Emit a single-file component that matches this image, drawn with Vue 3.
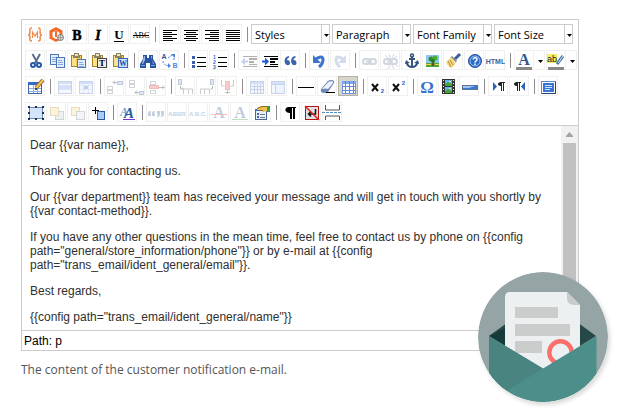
<template>
  <main class="page">
    <div class="field">
      <section class="editor">
        <div class="toolbar" role="toolbar" aria-label="Editor toolbar">
          <div v-for="(row, r) in rows" :key="r" class="row">
            <template v-for="(item, i) in row" :key="i">
              <span v-if="item === '|'" class="separator"></span>
              <span v-else-if="item.select" class="combo">
                <select :aria-label="item.select">
                  <option>{{ item.select }}</option>
                </select>
                <svg class="combo-arrow" viewBox="0 0 7 18"><path d="M2 9h5L4.500 12z" /></svg>
              </span>
              <span v-else-if="item.menu" class="split">
                <button type="button" class="tool" :title="item.menu">
                  <svg viewBox="0 0 20 20" v-html="icons[item.menu]"></svg>
                </button>
                <button type="button" class="drop" :title="item.menu + ' menu'">
                  <svg viewBox="0 0 11 20"><path d="M4 10h5L6.500 13z" /></svg>
                </button>
              </span>
              <button
                v-else
                type="button"
                :class="['tool', { active: item === 'visualaid' }]"
                :title="item"
                :disabled="disabled.includes(item)"
              >
                <svg viewBox="0 0 20 20" v-html="icons[item]"></svg>
              </button>
            </template>
          </div>
        </div>

        <div class="body">
          <div class="content" contenteditable="true">
            <p v-for="(text, i) in message" :key="i">{{ text }}</p>
          </div>
          <div class="scrollbar">
            <svg viewBox="0 0 17 17"><path d="M5 11h7v-1l-3.500-4L5 10z" /></svg>
            <div class="thumb"></div>
            <svg viewBox="0 0 17 17"><path d="M5 6h7v1l-3.500 4L5 7z" /></svg>
          </div>
        </div>

        <div class="path">Path: <a href="#">p</a></div>
      </section>
      <p class="note">The content of the customer notification e-mail.</p>

      <svg class="badge" viewBox="0 0 130 130">
        <defs>
          <clipPath id="round"><circle cx="65" cy="65" r="65" /></clipPath>
        </defs>
        <g clip-path="url(#round)">
          <rect width="130" height="130" fill="#95a5a5" />
          <path d="M11 64L65 25l53 39-53 33z" fill="#264846" />
          <path d="M11 64l16-8v18z" fill="#173b3a" />
          <path d="M32 20h57l13 13v64H27V25q0-5 5-5z" fill="#ecf0f1" />
          <path d="M89 20l13 13h-6q-7 0-7-7z" fill="#c9caca" />
          <path d="M37 35h43v11H37zM37 52h55v12H37zM37 69h27v12H37z" fill="#cbcccc" />
          <circle cx="82.500" cy="80.500" r="11.200" fill="none" stroke="#fb706d" stroke-width="4.400" />
          <path d="M11 64l54 32.500L118.500 64v66H11z" fill="#4b8e8a" />
          <path d="M11 64l54 32.500L30 118l-19 12z" fill="#4a8480" />
        </g>
      </svg>
    </div>
  </main>
</template>

<script setup>
const message = [
  'Dear {{var name}},',
  'Thank you for contacting us.',
  'Our {{var department}} team has received your message and will get in touch with you shortly by {{var contact-method}}.',
  'If you have any other questions in the mean time, feel free to contact us by phone on {{config path="general/store_information/phone"}} or by e-mail at {{config path="trans_email/ident_general/email"}}.',
  'Best regards,',
  '{{config path="trans_email/ident_general/name"}}',
];

const rows = [
  [
    'variable', 'widget', 'bold', 'italic', 'underline', 'strike', '|',
    'left', 'center', 'right', 'justify', '|',
    { select: 'Styles' }, { select: 'Paragraph' }, { select: 'Font Family' }, { select: 'Font Size' },
  ],
  [
    'cut', 'copy', 'paste', 'pastetext', 'pasteword', '|', 'search', 'replace', '|',
    'bullist', 'numlist', '|', 'outdent', 'indent', 'blockquote', '|', 'undo', 'redo', '|',
    'link', 'unlink', 'anchor', 'image', 'cleanup', 'help', 'html', '|',
    { menu: 'forecolor' }, { menu: 'backcolor' },
  ],
  [
    'table', '|', 'rowprops', 'cellprops', '|', 'rowbefore', 'rowafter', 'rowdelete', '|',
    'colbefore', 'colafter', 'coldelete', '|', 'splitcells', 'mergecells', '|',
    'hr', 'eraser', 'visualaid', '|', 'sub', 'sup', '|', 'charmap', 'media', 'advhr', '|',
    'ltr', 'rtl', '|', 'fullscreen',
  ],
  [
    'layer', 'forward', 'backward', 'absolute', '|', 'styleprops', '|',
    'cite', 'abbr', 'acronym', 'del', 'ins', 'attribs', '|', 'visualchars', 'nonbreaking', 'pagebreak',
  ],
];

const disabled = [
  'outdent', 'redo', 'link', 'unlink', 'rowprops', 'cellprops', 'rowbefore', 'rowafter', 'rowdelete',
  'colbefore', 'colafter', 'coldelete', 'splitcells', 'mergecells', 'forward', 'backward',
  'cite', 'abbr', 'acronym', 'del', 'ins',
];

// drawing helpers, all on a 20x20 grid
const box = (x, y, w, h, fill) => `<rect x="${x}" y="${y}" width="${w}" height="${h}" fill="${fill}"/>`;
const frame = (x, y, w, h, fill, stroke) =>
  `<rect x="${x + 0.5}" y="${y + 0.5}" width="${w - 1}" height="${h - 1}" fill="${fill}" stroke="${stroke}"/>`;
const shape = (d, fill) => `<path d="${d}" fill="${fill}"/>`;
const line = (d, stroke, width = 1) => `<path d="${d}" fill="none" stroke="${stroke}" stroke-width="${width}"/>`;
const text = (x, y, size, value, fill = '#000', extra = '') =>
  `<text x="${x}" y="${y}" font-size="${size}" fill="${fill}" text-anchor="middle" ${extra}>${value}</text>`;
const serif = 'font-family="Liberation Serif" font-weight="bold"';
const sans = 'font-family="Liberation Sans" font-weight="bold"';

const bars = (list) => list.map(([x, w], i) => box(x, 6 + i * 2, w, 1, '#000')).join('');

const clipboard =
  frame(4, 5, 11, 12, '#f3c94c', '#a9822a') +
  shape('M5 6h4v10H5z', '#fbe28a') +
  shape('M7 3h5v2h1v3H6V5h1z', '#8a8462') + box(8, 4, 3, 2, '#e9e4c4');
const sheet = (x, y, w, h) =>
  frame(x, y, w, h, '#e3eefc', '#4f75b5') +
  box(x + 2, y + 3, w - 5, 1, '#86a8dd') + box(x + 2, y + 5, w - 4, 1, '#86a8dd') + box(x + 2, y + 7, w - 4, 1, '#86a8dd');
const grid = frame(4, 5, 14, 13, '#dce8fb', '#4b70b8') + box(5, 6, 12, 2, '#6f9be8');
const cell = (x, y) => frame(x, y, 6, 4, '#fff', '#687384');
const quote = 'M8.500 6C5 7 4 10 5 13c1 3 5 3 5 0 0-2-1-3-3-3 0-1 1-2 2.500-3zM15 6c-3.500 1-4.500 4-3.500 7 1 3 5 3 5 0 0-2-1-3-3-3 0-1 1-2 2.500-3z';
const indentLines = box(5, 6, 14, 1, '#000') + box(11, 8, 8, 2, '#000') + box(11, 11, 5, 2, '#000') +
  box(11, 14, 8, 1, '#000') + box(5, 16, 14, 1, '#000');
const chain = '<g fill="none" stroke="#6b7c9e" stroke-width="2"><rect x="4" y="9" width="7" height="5" rx="2.500"/><rect x="10" y="9" width="7" height="5" rx="2.500"/><path d="M7 11.500h6"/></g>';
const pilcrow = (x, y) =>
  shape(`M${x} ${y}h7v1h-1v8h-1v-8h-1v8h-1v-5c-4 0-4-4 0-4z`, '#222');

const icons = {
  variable:
    line('M7 4Q4 4 5 8q0 3-2 3 2 0 2 3-1 3 2 3M13 4q3 0 2 4 0 3 2 3-2 0-2 3 1 3-2 3', '#f08a50', 1.5) +
    line('M7.500 14V8l2.500 4 2.500-4v6', '#f08a50', 1.2),
  widget:
    shape('M10 3l6.500 3.500v8L10 18l-6.500-3.500v-8z', '#f26b2b') +
    shape('M10 6.500l3.500 2v5L10 15l-3.500-2V8.500z', '#fff') +
    line('M10 7v6', '#f26b2b', 2) +
    '<circle cx="14.500" cy="13.500" r="3" fill="#ddd" stroke="#777"/>' + line('M12 13.500h5M14.500 11v5', '#888', 0.7),
  bold: text(10, 16, 14, 'B', '#000', serif + ' stroke="#000" stroke-width=".5"'),
  italic: text(10, 16, 14, 'I', '#000', serif + ' font-style="italic" stroke="#000" stroke-width=".5"'),
  underline: text(10, 15, 13, 'U', '#000', serif) + box(5, 17, 10, 1, '#000'),
  strike: text(11, 14, 8, 'ABC', '#000', 'font-family="Liberation Serif"') + box(3, 11, 16, 1, '#000'),
  left: bars([[4, 14], [4, 9], [4, 14], [4, 9], [4, 14], [4, 10]]),
  center: bars([[4, 14], [6, 10], [4, 14], [6, 10], [4, 14], [6, 10]]),
  right: bars([[4, 14], [9, 9], [4, 14], [9, 9], [4, 14], [8, 10]]),
  justify: bars([[4, 14], [4, 14], [4, 14], [4, 14], [4, 14], [4, 14]]),

  cut:
    line('M7.500 4l5 9M15 4l-5 9', '#5c6f8f', 2) +
    '<g fill="none" stroke="#2857a8" stroke-width="2"><circle cx="8" cy="15" r="2"/><circle cx="14" cy="15" r="2"/></g>',
  copy: sheet(4, 4, 9, 11) + sheet(10, 7, 9, 11),
  paste: clipboard + sheet(10, 9, 9, 9),
  pastetext: clipboard + frame(9, 8, 10, 10, '#eee', '#444') + text(14, 16, 9, 'T', '#000', serif),
  pasteword: clipboard + frame(9, 8, 10, 10, '#cfe0fa', '#3465b8') + text(14, 16, 8, 'W', '#1d4fa8', serif),
  search:
    shape('M5 5h4v3h2V5h4v4l3 5v4h-6v-5H8v5H2v-4l3-5z', '#27549f') +
    shape('M6 6h1v4l-2 4H4zM13 6h1v4l2 4h-1z', '#9dbdf0') + box(3, 15, 4, 1, '#7ea6e6') + box(13, 15, 4, 1, '#7ea6e6'),
  replace:
    text(5, 9, 7, 'A', '#33549a', sans) + text(16, 18, 7, 'B', '#4e86e6', sans) +
    '<path d="M9 8l4-3M4 11q0 4 6 5M15 5v5" fill="none" stroke="#4e82da" stroke-dasharray="2 1"/>' +
    shape('M12 4h4v4zM9 13l3 3-3 2z', '#4e82da'),
  bullist: [6, 11, 15].map((y) => box(4, y, 3, 3, '#3b5fae') + box(9, y + 1, 9, 1, '#000')).join(''),
  numlist: [1, 2, 3].map((n) => text(5.5, 4 + n * 5, 5, n, '#2e66cc', sans)).join('') +
    box(9, 7, 9, 1, '#000') + box(9, 12, 9, 1, '#000') + box(9, 16, 9, 1, '#000'),
  outdent: indentLines + shape('M3 11.500l4-4v3h3v2H7v3z', '#3b6fd0'),
  indent: indentLines + shape('M10 11.500l-4-4v3H3v2h3v3z', '#1f5bd0'),
  blockquote: shape(quote, '#3a65ac'),
  undo: line('M5.500 10Q14 4 14 10q0 4-4 7', '#3f74ce', 3) + shape('M4 5v8h8z', '#3f74ce'),
  redo: line('M14.500 10Q6 4 6 10q0 4 4 7', '#6f8fc4', 3) + shape('M16 5v8H8z', '#6f8fc4'),
  link: chain,
  unlink: chain + line('M9 4l1 4M14 4l-2 4M17 6l-3 2M5 5l3 3M10 15l-2 4M12 15l2 4M15 14l3 3', '#6b7c9e'),
  anchor:
    '<circle cx="11" cy="5.500" r="1.500" fill="none" stroke="#35547f" stroke-width="1.500"/>' +
    line('M11 7v10M8 9h6M5.500 12q1 5 5.500 5t5.500-5', '#35547f', 2) + shape('M4 14l1-4 4 3zM18 14l-1-4-4 3z', '#35547f'),
  image:
    box(4, 5, 13, 9, '#8ec5f5') + box(4, 13, 13, 4, '#4ea52f') + box(10, 12, 2, 4, '#7a4a1c') +
    '<circle cx="9" cy="9" r="2.500" fill="#2d8f24"/><circle cx="13" cy="8" r="2.500" fill="#4bae2e"/><circle cx="11" cy="11" r="2" fill="#217d1e"/>' +
    box(4, 14, 5, 1, '#f1d84a') + box(13, 14, 4, 1, '#f1d84a'),
  cleanup:
    line('M12 9l5-5', '#3f5d95', 3) + shape('M9 6l5 5-2 2-5-5z', '#6f7da0') +
    shape('M8 7l5 5q-1 4-5 6-4-2-5-6 3-3 5-5z', '#f5d98a') + line('M5 11l3 6M7 10l3 5', '#b98a38'),
  help:
    '<circle cx="11" cy="11" r="6.500" fill="#2d68c4" stroke="#1f4f9e"/><circle cx="11" cy="11" r="5" fill="none" stroke="#bcd5fa" stroke-width=".8"/>' +
    text(11, 14.5, 10, '?', '#fff', sans),
  html: text(10.5, 14, 7, 'HTML', '#3c6496', sans),
  forecolor: text(10, 15, 16, 'A', '#34568f', serif) + box(2, 17, 16, 3, '#888'),
  backcolor:
    box(1, 4, 10, 9, '#f5ef63') + text(6, 12, 9, 'ab', '#222', 'font-family="Liberation Sans"') +
    line('M11 14l6-8', '#4470a8', 3) + line('M12 13l5-7', '#dbe8fa') + box(2, 17, 16, 3, '#888'),

  table:
    frame(3, 6, 14, 12, '#fff', '#3e64a8') + box(3, 6, 14, 3, '#3469c8') + line('M4 12.500h12M4 15.500h12M8.500 9v8M12.500 9v8', '#88aee6') +
    line('M11 12l7-8', '#a06a2d', 4) + line('M11 12l7-8', '#f1c35b', 2) + box(10, 12, 2, 2, '#444'),
  rowprops: grid + box(5, 10, 12, 3, '#6f9be8') + line('M5 13.500h12M5 9.500h12', '#8aa9de'),
  cellprops: grid + box(9, 10, 5, 3, '#2763d9') + line('M5 9.500h12M5 13.500h12M8.500 8v9M13.500 8v9', '#9bb6e4'),
  rowbefore: line('M9 6.500h4M11 4.500l-2 2 2 2', '#222') + frame(13, 5, 6, 4, '#8ab0ee', '#3b5486') + cell(3, 10) + cell(3, 14),
  rowafter: cell(4, 4) + cell(4, 8) + line('M10 16.500h4M12 14.500l-2 2 2 2', '#222') + frame(14, 15, 5, 4, '#8ab0ee', '#3b5486'),
  rowdelete: cell(4, 5) + frame(3, 9, 10, 4, '#f05050', '#c22') + cell(4, 14) + line('M13 11.500h6M17 9.500v4', '#333'),
  colbefore: frame(3, 3, 4, 6, '#8ab0ee', '#3b5486') + line('M5.500 10v3h3M7 11.500l2 2', '#222') + line('M8.500 18v-5h9v5M13.500 13v5', '#555'),
  colafter: frame(14, 3, 4, 6, '#8ab0ee', '#3b5486') + line('M16.500 10v3h-2', '#222') + line('M4.500 18v-5h9v5M8.500 13v5', '#555'),
  coldelete: line('M4.500 4v6h3M16.500 4v6h-3', '#555') + frame(8, 5, 5, 9, '#f05050', '#c22') + line('M10.500 14v4M8 16.500h5', '#333'),
  splitcells: grid + line('M5 10.500h12M5 13.500h12M8.500 8v9M11.500 8v9M14.500 8v9', '#4b70b8'),
  mergecells: grid + line('M8.500 8v9M5 8.500h12', '#4b70b8') + box(9, 9, 8, 8, '#c7daf8'),
  hr: box(2, 11, 16, 1, '#000'),
  eraser:
    shape('M4 13l7-8q1-1 3-1 4 0 3 3l-6 9q-1 1-4 1-4 0-3-4z', '#6f89b8') +
    shape('M5 13L12 5.500q5-1 4 1.500l-5 6q-2-1-6 0z', '#eef4fd') + box(9, 16, 9, 1, '#000'),
  visualaid:
    frame(4, 5, 14, 13, '#fff', '#6f97e0') + box(4, 5, 14, 3, '#7fa6ee') +
    '<path d="M4 10.500h14M4 14.500h14M7.500 5v13M11.500 5v13M15.500 5v13" stroke="#6287d8"/>',
  sub: line('M5 8l6 7M11 8l-6 7', '#111', 2) + text(15.5, 17, 6, '2', '#2a62c8', sans),
  sup: line('M5 8l6 7M11 8l-6 7', '#111', 2) + text(15.5, 9, 6, '2', '#2a62c8', sans),
  charmap: text(10, 17, 17, 'Ω', '#3c70cf', serif),
  media:
    box(4, 3, 13, 15, '#333') + box(7, 4, 7, 6, '#63b7ef') + box(7, 11, 7, 6, '#63b7ef') +
    shape('M7 8l3-2 4 2v2H7zM7 15l3-2 4 2v2H7z', '#46a634') + box(11, 5, 2, 1, '#ffd94e') + box(11, 12, 2, 1, '#ffd94e') +
    [4, 7, 10, 13, 16].map((y) => box(5, y, 1, 1, '#eee') + box(15, y, 1, 1, '#eee')).join(''),
  advhr: frame(3, 9, 16, 5, '#3a78d8', '#5c7392') + shape('M4 10h12l-6 2H4z', '#9fc5f8'),
  ltr: shape('M5 6l4 4.500L5 15z', '#2d62b5') + pilcrow(10, 6),
  rtl: pilcrow(5, 6) + shape('M16 6v9l-4-4.500z', '#2d62b5'),
  fullscreen:
    frame(3, 5, 15, 13, '#fff', '#5c86c8') + box(5, 7, 11, 9, '#3976d4') +
    line('M7 9.500h7M7 11.500h7M7 13.500h5', '#cfe2fc') + line('M4 17.500h13.500V6', '#24426f'),

  layer:
    frame(4, 5, 14, 12, '#d4e4fb', '#6f87ac') +
    [[3, 4], [10, 4], [17, 4], [3, 10], [17, 10], [3, 16], [10, 16], [17, 16]].map(([x, y]) => box(x, y, 2, 2, '#17335c')).join(''),
  forward: frame(9, 9, 9, 9, '#c9ccd4', '#6d7688') + frame(4, 5, 9, 9, '#f6dc7c', '#b08b36'),
  backward: frame(4, 5, 9, 9, '#f6dc7c', '#b08b36') + frame(9, 9, 9, 9, '#dfe1e6', '#6d7688'),
  absolute: line('M7.500 5v7M4 8.500h7', '#000', 1) + frame(9, 9, 8, 9, '#a9cbf8', '#2d5a9f'),
  styleprops:
    text(7, 14, 12, 'A', '#6a9be0', serif + ' font-style="italic"') +
    text(12, 16, 15, 'A', '#2f5c9e', serif + ' font-style="italic"') + box(6, 17, 12, 1, '#7a35d8'),
  cite:
    [2, 6].map((x) => shape(`M${x} 14v-3q0-2 3-2v1l-1 1.500h1V14z`, '#3d6590')).join('') +
    [11, 15].map((x) => shape(`M${x} 9h3v3q0 3-3 3v-1l1-2h-1z`, '#3d6590')).join(''),
  abbr: text(10, 14, 6, 'ABBR', '#3d6590', sans),
  acronym: text(10, 14, 6, 'A.B.C.', '#3d6590', sans),
  del: text(10, 16, 16, 'A', '#34568f', serif) + box(2, 12, 16, 1, '#e22'),
  ins: text(10, 16, 16, 'A', '#34568f', serif) + box(2, 17, 16, 1, '#2a9a2a'),
  attribs:
    frame(4, 7, 12, 11, '#e6effc', '#4a6796') + box(4, 7, 12, 2, '#3b6bb8') +
    box(6, 11, 2, 2, '#3b6bb8') + box(6, 14, 2, 2, '#3b6bb8') + box(9, 12, 5, 1, '#778') + box(9, 15, 5, 1, '#778') +
    shape('M6 6l5-2h5v5l-4 1-2-2H6z', '#f0c04a') + line('M6 6.500l5-2h5M8 8.500h4', '#8b6a25') + box(16, 4, 3, 6, '#3d9a45'),
  visualchars: shape('M7 5h9v1h-1v11h-2V6h-1v11h-2v-6c-6 0-6-6-1-6z', '#000'),
  nonbreaking: frame(4, 4, 14, 14, '#dde0e4', '#b11') + line('M14.500 7v5H8M10 9.500L7.500 12l2.500 2.500', '#111', 1.5) + line('M4 4l14 14', '#d22', 1.5),
  pagebreak:
    line('M3.500 3v5h14V3M3.500 18v-4h14v4', '#555') +
    '<path d="M0 10.500h20" stroke="#4f8fc4" stroke-dasharray="3 1"/>',
};
</script>

<style>
body {
  margin: 0;
  background: #fff;
}
</style>

<style scoped>
.page {
  box-sizing: border-box;
  min-height: 100vh;
  padding: 19px 46px 16px 21px;
  font-family: "Liberation Sans", Arial, sans-serif;
  font-size: 12px;
  line-height: 14px;
}

.field {
  position: relative;
}

.editor {
  border: 1px solid #ccc;
  background: #fff;
}

.toolbar {
  display: flex;
  flex-direction: column;
  gap: 6px;
  padding: 4px 0 3px 3px;
  border-bottom: 1px solid #ccc;
}

.row {
  display: flex;
  height: 20px;
}

.tool,
.drop {
  flex: none;
  box-sizing: border-box;
  width: 20px;
  height: 20px;
  margin: 0 1px 0 0;
  padding: 0;
  border: 1px solid #f0f0ee;
  background: #fff;
}

.tool svg {
  display: block;
  width: 20px;
  height: 20px;
  margin: -1px;
}

.tool:disabled svg {
  opacity: 0.3;
}

.tool.active {
  border-color: #b5b2a5;
  background: #d8d5cc;
}

.split {
  display: flex;
  margin-right: 1px;
}

.split .tool {
  margin-right: 0;
}

.drop {
  width: 11px;
  margin-right: 0;
  border-left: 0;
}

.drop svg {
  display: block;
  width: 11px;
  height: 20px;
  margin: -1px 0;
}

.separator {
  flex: none;
  width: 1px;
  height: 15px;
  margin: 3px 3px 0 4px;
  background: #8f8b90;
}

.combo {
  display: flex;
  flex: none;
  box-sizing: border-box;
  width: 79px;
  height: 20px;
  margin-right: 2px;
  border: 1px solid #ccc;
}

.combo select {
  flex: 1;
  min-width: 0;
  padding: 0 0 0 3px;
  border: 0;
  background: #fff;
  color: #000;
  font-family: "Open Sans", sans-serif;
  font-size: 11px;
  appearance: none;
}

.combo-arrow {
  width: 7px;
  height: 18px;
  border-left: 1px solid #ccc;
}

.body {
  display: flex;
}

.content {
  flex: 1;
  padding: 12px 8px 6px;
  color: #2f2f2f;
  outline: none;
}

.content p {
  margin: 0 0 12px;
}

.content p:last-child {
  margin-bottom: 0;
}

.scrollbar {
  display: flex;
  flex-direction: column;
  width: 17px;
  background: #f1f1f1;
}

.scrollbar svg {
  flex: none;
  width: 17px;
  height: 17px;
  fill: #a3a3a3;
}

.thumb {
  flex: 1;
  margin: 0 2px;
  background: #c1c1c1;
}

.path {
  padding: 3px 2px 2px;
  border-top: 1px solid #ccc;
  color: #000;
}

.path a {
  color: inherit;
  text-decoration: none;
}

.note {
  margin: 10px 0 0;
  color: #555;
  font-family: "Open Sans", sans-serif;
  font-size: 12px;
  line-height: 18px;
}

.badge {
  position: absolute;
  top: 253px;
  right: -29px;
  width: 130px;
  height: 130px;
  border-radius: 50%;
  box-shadow: 2px 3px 4px rgba(0, 0, 0, 0.15);
}
</style>
